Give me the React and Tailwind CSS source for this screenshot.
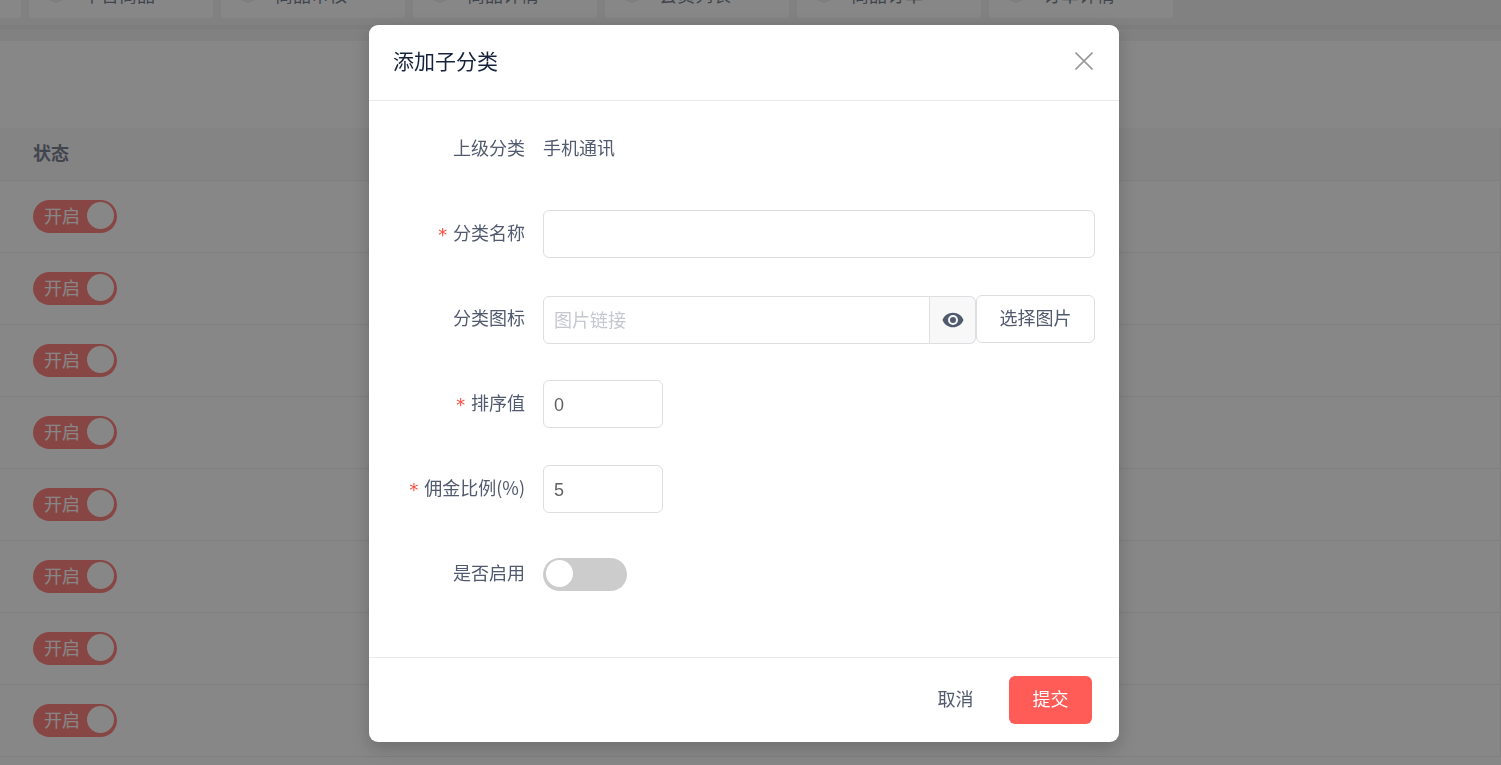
import { useState } from "react";
import { clsx } from "clsx";

const tabs = ["平台商品", "商品审核", "商品详情", "会员列表", "商品订单", "订单详情"];
const rows = [1, 2, 3, 4, 5, 6, 7, 8];

/* --------------------------------- Switch --------------------------------- */

function Switch({ id, checked, onChange, text, label }) {
  return (
    <label
      className={clsx(
        "relative flex h-[33px] w-[84px] items-center rounded-full px-[11px] cursor-pointer",
        checked ? "bg-[#ff5c58]" : "bg-[#cccccc]",
      )}
    >
      <input
        id={id}
        type="checkbox"
        role="switch"
        aria-label={label}
        checked={checked}
        onChange={onChange}
        className="absolute inset-0 opacity-0"
      />
      {checked && <span className="pb-[3px] text-[18px] leading-6 text-white">{text}</span>}
      <span
        className={clsx(
          "absolute top-[2px] size-[27px] rounded-full bg-white",
          checked ? "right-[3px]" : "left-[3px]",
        )}
      />
    </label>
  );
}

/* ------------------------------- Page behind ------------------------------- */

function TabBar() {
  return (
    <nav className="flex h-[25px] items-end gap-2 overflow-hidden pb-[7px]">
      <div className="h-12 w-[21px] shrink-0 rounded-r bg-white" />
      {tabs.map((tab) => (
        <a
          key={tab}
          href="#"
          className="flex h-12 w-[184px] shrink-0 items-center rounded bg-white px-[18px] text-[18px] text-[#515a6e]"
        >
          <span className="size-[18px] rounded-full bg-[#e8eaec]" />
          <span className="ml-[18px] flex-1 whitespace-nowrap">{tab}</span>
          <svg viewBox="0 0 16 16" className="size-4" fill="none" stroke="#bbbbbb">
            <path d="M3 3l10 10M13 3L3 13" />
          </svg>
        </a>
      ))}
    </nav>
  );
}

function CategoryTable() {
  const [enabled, setEnabled] = useState(rows.map(() => true));

  const toggle = (index) =>
    setEnabled((prev) => prev.map((on, i) => (i === index ? !on : on)));

  return (
    <table className="w-full border-r border-[#e8eaec] text-[18px] text-[#515a6e]">
      <thead>
        <tr className="h-[52px] border-b border-[#e8eaec] bg-[#f8f8f9]">
          <th className="px-[33px] pb-[2px] text-left font-bold">状态</th>
        </tr>
      </thead>
      <tbody>
        {rows.map((row, i) => (
          <tr key={row} className="h-[72px] border-b border-[#e8eaec]">
            <td className="px-[33px]">
              <Switch
                label="状态"
                text="开启"
                checked={enabled[i]}
                onChange={() => toggle(i)}
              />
            </td>
          </tr>
        ))}
      </tbody>
    </table>
  );
}

/* ---------------------------------- Form ---------------------------------- */

function FormRow({ label, htmlFor, required, children }) {
  return (
    <div className="flex h-12 items-center gap-[18px]">
      <label
        htmlFor={htmlFor}
        className="flex w-[132px] shrink-0 items-center justify-end gap-[5px] whitespace-nowrap pb-[3px]"
      >
        {required && (
          <span className="pt-[5px] font-['DejaVu_Sans_Mono',monospace] text-[18px] leading-5 text-[#ff4a3d]">
            *
          </span>
        )}
        {label}
      </label>
      <div className="flex min-w-0 flex-1 items-center">{children}</div>
    </div>
  );
}

const inputClass =
  "h-12 border border-[#dcdee2] bg-white px-[10px] pt-[2px] font-['Liberation_Sans','Noto_Sans_CJK_SC',sans-serif] text-[18px] text-[#606266] placeholder:text-[#c5c8ce] focus:outline-none focus:border-[#ff5c58]";

function CategoryModal() {
  const [name, setName] = useState("");
  const [icon, setIcon] = useState("");
  const [sort, setSort] = useState("0");
  const [rate, setRate] = useState("5");
  const [enabled, setEnabled] = useState(false);

  return (
    <form
      role="dialog"
      aria-labelledby="modal-title"
      onSubmit={(e) => e.preventDefault()}
      className="w-full max-w-[750px] rounded-[9px] bg-white text-[18px] text-[#515a6e] shadow-[0_6px_18px_rgba(0,0,0,0.2)]"
    >
      <header className="flex h-[76px] items-center justify-between border-b border-[#e8eaec] pb-[3px] pl-6 pr-[26px]">
        <h2 id="modal-title" className="pb-[3px] text-[21px] leading-8 text-[#17233d]">
          添加子分类
        </h2>
        <button type="button" aria-label="关闭">
          <svg viewBox="0 0 18 18" className="size-[18px]" fill="none" stroke="#999999" strokeWidth="1.6">
            <path d="M0.5 0.5l17 17M17.5 0.5l-17 17" />
          </svg>
        </button>
      </header>

      <div className="flex flex-col gap-[37px] px-6 pb-[59px] pt-6">
        <FormRow label="上级分类">
          <span className="pb-[3px]">手机通讯</span>
        </FormRow>

        <FormRow label="分类名称" htmlFor="name" required>
          <input
            id="name"
            value={name}
            onChange={(e) => setName(e.target.value)}
            className={`${inputClass} w-full rounded-md`}
          />
        </FormRow>

        <FormRow label="分类图标" htmlFor="icon">
          <div className="flex min-w-0 flex-1 pt-[2px]">
            <input
              id="icon"
              value={icon}
              placeholder="图片链接"
              onChange={(e) => setIcon(e.target.value)}
              className={`${inputClass} min-w-0 flex-1 rounded-l-md`}
            />
            <button
              type="button"
              aria-label="预览"
              className="flex h-12 w-[46px] items-center justify-center rounded-r-md border border-l-0 border-[#dcdee2] bg-[#f8f8f9]"
            >
              <svg viewBox="0 0 22 16" className="h-4 w-[22px]">
                <path
                  fill="#515a6e"
                  fillRule="evenodd"
                  d="M11 0.7C6 0.7 2.1 3.7 0.5 8c1.6 4.3 5.5 7.3 10.5 7.3s8.9-3 10.5-7.3C19.9 3.7 16 0.7 11 0.7zm0 12.3a5 5 0 1 1 0-10 5 5 0 0 1 0 10zm0-8a3 3 0 1 0 0 6 3 3 0 0 0 0-6z"
                />
              </svg>
            </button>
          </div>
          <button
            type="button"
            className="h-12 w-[119px] whitespace-nowrap rounded-md border border-[#dcdee2] bg-white pb-[3px]"
          >
            选择图片
          </button>
        </FormRow>

        <FormRow label="排序值" htmlFor="sort" required>
          <input
            id="sort"
            value={sort}
            onChange={(e) => setSort(e.target.value)}
            className={`${inputClass} w-[120px] rounded-md`}
          />
        </FormRow>

        <FormRow label="佣金比例(%)" htmlFor="rate" required>
          <input
            id="rate"
            value={rate}
            onChange={(e) => setRate(e.target.value)}
            className={`${inputClass} w-[120px] rounded-md`}
          />
        </FormRow>

        <FormRow label="是否启用" htmlFor="enabled">
          <Switch
            id="enabled"
            label="是否启用"
            text="开启"
            checked={enabled}
            onChange={() => setEnabled(!enabled)}
          />
        </FormRow>
      </div>

      <footer className="flex justify-end gap-3 border-t border-[#e8eaec] py-[18px] pr-[27px]">
        <button type="button" className="h-12 w-[83px] rounded-md pb-[3px]">
          取消
        </button>
        <button type="submit" className="h-12 w-[83px] rounded-md bg-[#ff5c58] pb-[3px] text-white">
          提交
        </button>
      </footer>
    </form>
  );
}

export default function App() {
  return (
    <div className="relative h-screen overflow-hidden bg-[#f0f0f0] font-['Noto_Sans_CJK_SC',sans-serif] font-normal">
      <TabBar />
      <main className="border-t-4 border-[#e6e6e6] pt-3">
        <section className="bg-white pb-6 pt-[87px]">
          <CategoryTable />
        </section>
      </main>

      {/* Mask and dialog */}
      <div className="fixed inset-0 flex items-start justify-center bg-[rgba(55,55,55,0.6)] pr-[13px] pt-[25px]">
        <CategoryModal />
      </div>
    </div>
  );
}
